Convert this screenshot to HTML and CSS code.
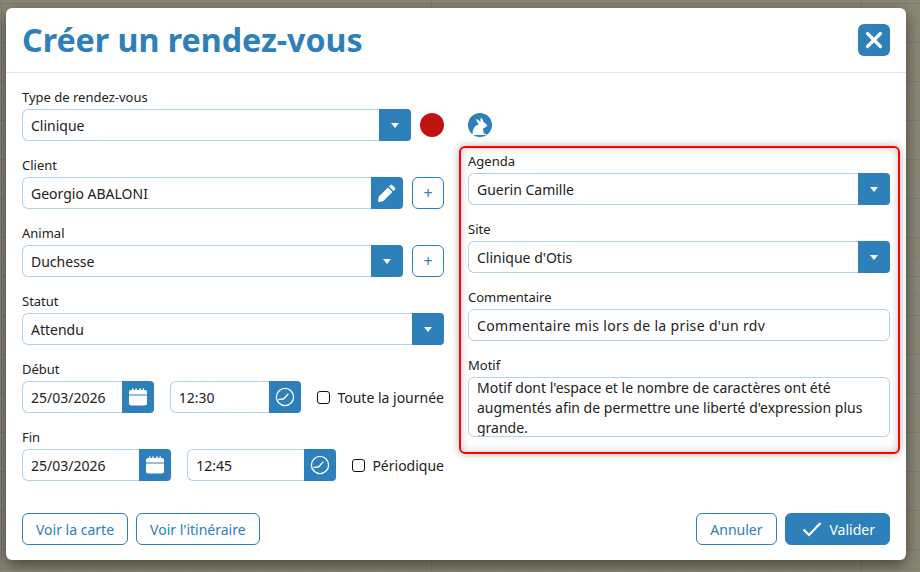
FILE: index.html

```html
<!DOCTYPE html>
<html lang="fr">
<head>
    <meta charset="UTF-8">
    <title>Créer un rendez-vous</title>
    <link rel="stylesheet" href="styles.css">
</head>
<body>
<div class="modal">
    <header class="modal-head">
        <h1>Créer un rendez-vous</h1>
        <button class="close-btn">
            <svg width="20" height="20" viewBox="0 0 20 20"><path d="M3.500 3.500 16.500 16.500M16.500 3.500 3.500 16.500" stroke="#fff" stroke-width="3.200" stroke-linecap="round"/></svg>
        </button>
    </header>
    <div class="modal-body">
        <div class="col">
            <div class="field">
                <label>Type de rendez-vous</label>
                <div class="row">
                    <div class="group">
                        <input type="text" value="Clinique">
                        <span class="addon"><i class="caret"></i></span>
                    </div>
                    <span class="dot"></span>
                </div>
            </div>
            <div class="field">
                <label>Client</label>
                <div class="row">
                    <div class="group">
                        <input type="text" value="Georgio ABALONI">
                        <span class="addon">
                            <svg width="20" height="20" viewBox="0 0 20 20"><path fill="#fff" d="M13.600 1.900a1 1 0 0 1 1.400 0l3.100 3.100a1 1 0 0 1 0 1.400l-1.600 1.600-4.500-4.500zM10.900 4.600l4.500 4.500L6.200 18.300 1.400 19a.4.4 0 0 1-.4-.4l.7-4.800z"/></svg>
                        </span>
                    </div>
                    <button class="plus-btn">+</button>
                </div>
            </div>
            <div class="field">
                <label>Animal</label>
                <div class="row">
                    <div class="group">
                        <input type="text" value="Duchesse">
                        <span class="addon"><i class="caret"></i></span>
                    </div>
                    <button class="plus-btn">+</button>
                </div>
            </div>
            <div class="field">
                <label>Statut</label>
                <div class="group">
                    <input type="text" value="Attendu">
                    <span class="addon"><i class="caret"></i></span>
                </div>
            </div>
            <div class="field">
                <label>Début</label>
                <div class="row date-row">
                    <div class="group">
                        <input type="text" value="25/03/2026">
                        <span class="addon">
                            <svg width="20" height="20" viewBox="0 0 20 20"><path fill="#fff" d="M4 1.500h1.600v2H4zM7.200 1.500h1.600v2H7.200zM11.200 1.500h1.600v2h-1.600zM14.400 1.500H16v2h-1.600zM3 3h14a2 2 0 0 1 2 2v2.400H1V5a2 2 0 0 1 2-2zM1 8.400h18V16a2.500 2.500 0 0 1-2.500 2.500h-13A2.500 2.500 0 0 1 1 16z"/></svg>
                        </span>
                    </div>
                    <div class="group">
                        <input type="text" value="12:30">
                        <span class="addon">
                            <svg width="20" height="20" viewBox="0 0 20 20"><circle cx="10" cy="10" r="8.600" fill="none" stroke="#fff" stroke-width="1.300"/><path d="M3.500 12.600 8.800 11.800 13.400 6.600" fill="none" stroke="#fff" stroke-width="1.400"/></svg>
                        </span>
                    </div>
                    <label class="check"><input type="checkbox">Toute la journée</label>
                </div>
            </div>
            <div class="field">
                <label>Fin</label>
                <div class="row date-row">
                    <div class="group">
                        <input type="text" value="25/03/2026">
                        <span class="addon">
                            <svg width="20" height="20" viewBox="0 0 20 20"><path fill="#fff" d="M4 1.500h1.600v2H4zM7.200 1.500h1.600v2H7.200zM11.200 1.500h1.600v2h-1.600zM14.400 1.500H16v2h-1.600zM3 3h14a2 2 0 0 1 2 2v2.400H1V5a2 2 0 0 1 2-2zM1 8.400h18V16a2.500 2.500 0 0 1-2.500 2.500h-13A2.500 2.500 0 0 1 1 16z"/></svg>
                        </span>
                    </div>
                    <div class="group">
                        <input type="text" value="12:45">
                        <span class="addon">
                            <svg width="20" height="20" viewBox="0 0 20 20"><circle cx="10" cy="10" r="8.600" fill="none" stroke="#fff" stroke-width="1.300"/><path d="M3.500 12.600 8.800 11.800 13.400 6.600" fill="none" stroke="#fff" stroke-width="1.400"/></svg>
                        </span>
                    </div>
                    <label class="check"><input type="checkbox">Périodique</label>
                </div>
            </div>
        </div>
        <div class="col">
            <div class="species">
                <svg width="24" height="24" viewBox="0 0 24 24"><circle cx="12" cy="12" r="12" fill="#2d80b9"/><path fill="#fff" d="M4.500 22C4.500 17 6 12.500 11 11.500 9.500 10 8.500 8 8.200 6 10 6.500 11.500 7.500 12.500 9 12.300 7.500 12.400 6 13 4.800 14.500 6 15.600 8 15.800 9.600 17.400 10.200 18.600 11.400 19.200 13L17 14.400C16.400 14.800 15.800 15 15.200 15.100 15 17 15.400 19 16 20.600L18.600 21.400C19 21.600 19 22 18.600 22Z"/></svg>
            </div>
            <div class="highlight">
                <div class="field">
                    <label>Agenda</label>
                    <div class="group">
                        <input type="text" value="Guerin Camille">
                        <span class="addon"><i class="caret"></i></span>
                    </div>
                </div>
                <div class="field">
                    <label>Site</label>
                    <div class="group">
                        <input type="text" value="Clinique d'Otis">
                        <span class="addon"><i class="caret"></i></span>
                    </div>
                </div>
                <div class="field">
                    <label>Commentaire</label>
                    <input class="plain" type="text" value="Commentaire mis lors de la prise d'un rdv">
                </div>
                <div class="field">
                    <label>Motif</label>
                    <textarea>Motif dont l'espace et le nombre de caractères ont été augmentés afin de permettre une liberté d'expression plus grande.</textarea>
                </div>
            </div>
        </div>
    </div>
    <footer class="modal-foot">
        <div class="foot-group">
            <button class="btn">Voir la carte</button>
            <button class="btn">Voir l'itinéraire</button>
        </div>
        <div class="foot-group">
            <button class="btn">Annuler</button>
            <button class="btn btn-primary">
                <svg width="20" height="16" viewBox="0 0 20 16"><path d="M1.500 8.500 7 14 18.500 2" fill="none" stroke="#fff" stroke-width="2.200"/></svg>
                Valider
            </button>
        </div>
    </footer>
</div>
</body>
</html>
```

FILE: styles.css

```css
* { box-sizing: border-box; }
html, body { height: 100%; }
body {
    margin: 0;
    padding: 8px 14px 12px 6px;
    overflow: hidden;
    font-family: "Noto Sans", sans-serif;
    font-size: 14px;
    color: #222;
    background-color: #8b8775;
    background-image:
        linear-gradient(#7b7a78 1px, transparent 1px),
        linear-gradient(90deg, #7b7a78 1px, transparent 1px),
        conic-gradient(from 270deg at 1px 1px, #7b7a78 90deg, transparent 0);
    background-size: 100% 39px, 430px 100%, 3px 39px;
    background-position: 0 3px, 1px 0, 0 22px;
}
.modal {
    width: 900px;
    height: 552px;
    background: white;
    border-radius: 6px;
    box-shadow: 0 5px 15px rgba(0,0,0,0.5);
    display: flex;
    flex-direction: column;
}
.modal-head {
    height: 65px;
    padding: 16px 16px 0;
    display: flex;
    justify-content: space-between;
    align-items: flex-start;
    border-bottom: 1px solid #e5e5e5;
}
h1 {
    margin: 0;
    font-size: 32.200px;
    line-height: 32px;
    font-weight: 700;
    color: #2d80b9;
}
.close-btn {
    width: 32px;
    height: 32px;
    padding: 0;
    border: none;
    border-radius: 6px;
    background-color: #2d80b9;
    display: flex;
    align-items: center;
    justify-content: center;
}
.modal-body {
    flex: 1;
    padding: 16px 16px 0;
    display: grid;
    grid-template-columns: 422px 422px;
    column-gap: 24px;
}
.col { min-width: 0; }
.field { margin-bottom: 16px; }
.field > label {
    display: block;
    height: 20px;
    line-height: 16px;
    font-size: 13px;
}
.row { display: flex; align-items: center; gap: 9px; }
.date-row { gap: 16px; }
.group { flex: 1; min-width: 0; display: flex; height: 32px; }
input[type=text], textarea {
    font-family: inherit;
    font-size: 14px;
    color: #222;
    border: 1px solid #b5d3e8;
    border-radius: 6px;
    background: white;
    outline: none;
}
input[type=text] { height: 32px; padding: 0 8px; }
.group input[type=text] {
    flex: 1;
    min-width: 0;
    border-right: none;
    border-radius: 6px 0 0 6px;
}
.plain { width: 100%; letter-spacing: 0.35px; }
.addon {
    width: 32px;
    flex: none;
    background-color: #2d80b9;
    border-radius: 0 4px 4px 0;
    display: flex;
    align-items: center;
    justify-content: center;
}
.caret {
    width: 0;
    height: 0;
    border-left: 4.500px solid transparent;
    border-right: 4.500px solid transparent;
    border-top: 5px solid white;
}
.dot {
    width: 24px;
    height: 24px;
    flex: none;
    border-radius: 50%;
    background-color: #c11212;
}
.plus-btn {
    width: 32px;
    height: 32px;
    flex: none;
    padding: 0;
    font-family: inherit;
    font-size: 16px;
    color: #2d80b9;
    background: white;
    border: 1px solid #2d80b9;
    border-radius: 6px;
}
.check {
    flex: none;
    display: flex;
    align-items: center;
    gap: 7px;
    font-size: 14px;
    white-space: nowrap;
}
.check input {
    appearance: none;
    width: 13px;
    height: 13px;
    margin: 0;
    background: white;
    border: 1px solid #111;
    border-radius: 3px;
}
.species { height: 57px; padding-top: 24px; }
.highlight {
    margin: 0 -10px 0 -9px;
    padding: 5px 8px 0 7px;
    height: 308px;
    border: 2px solid #f00;
    border-radius: 6px;
    box-shadow: 0 0 8px rgba(0,0,0,0.3), inset 0 0 8px rgba(0,0,0,0.22);
}
textarea {
    display: block;
    width: 100%;
    height: 60px;
    padding: 0 8px;
    line-height: 20px;
    overflow: hidden;
    resize: none;
}
.modal-foot {
    padding: 0 16px 15px;
    display: flex;
    justify-content: space-between;
}
.foot-group { display: flex; gap: 8px; }
.btn {
    height: 32px;
    padding: 0 13px;
    font-family: inherit;
    font-size: 14px;
    color: #2d80b9;
    background: white;
    border: 1px solid #2d80b9;
    border-radius: 6px;
    display: flex;
    align-items: center;
}
.btn-primary {
    color: white;
    background-color: #2d80b9;
    padding: 0 14px 0 16px;
    gap: 8px;
}
```
